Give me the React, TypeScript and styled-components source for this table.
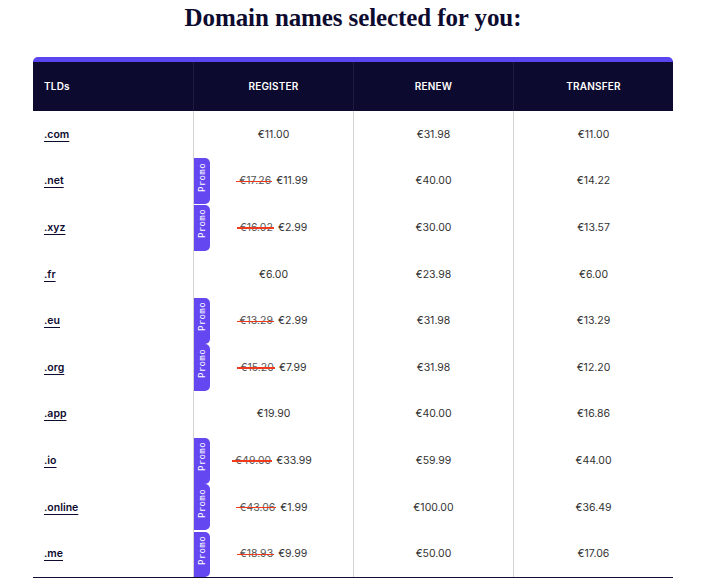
import React from "react";
import styled, { createGlobalStyle } from "styled-components";

const GlobalStyle = createGlobalStyle`
  html, body { margin: 0; padding: 0; background: #ffffff; }
  body { font-family: Inter, "Noto Sans", sans-serif; color: #333333; }
`;

const Page = styled.div`
  width: 640px;
  margin-left: 33px;
  padding-top: 3px;
`;

const Title = styled.h1`
  margin: 0;
  text-align: center;
  font-family: "Liberation Serif", serif;
  font-weight: 700;
  font-size: 25px;
  line-height: 30px;
  color: #0d0b2f;
  letter-spacing: -0.1px;
`;

const Table = styled.div`
  margin-top: 24px;
  border-bottom: 1.5px solid #0d0b2f;
`;

const HeaderRow = styled.div`
  display: grid;
  grid-template-columns: repeat(4, 160px);
  height: 49px;
  background: #0c0a2e;
  border-top: 5px solid #5b45f0;
  border-radius: 5px 5px 0 0;
`;

const HeaderCell = styled.div<{ $first?: boolean }>`
  display: flex;
  align-items: center;
  justify-content: ${(p) => (p.$first ? "flex-start" : "center")};
  padding-left: ${(p) => (p.$first ? "11px" : "0")};
  padding-bottom: 2px;
  border-left: ${(p) => (p.$first ? "none" : "1px solid rgba(255,255,255,0.07)")};
  color: #ffffff;
  font-size: 10px;
  font-weight: 600;
  letter-spacing: 0.2px;
`;

const Row = styled.div`
  display: grid;
  grid-template-columns: repeat(4, 160px);
  height: 46.6px;
`;

const TldCell = styled.div`
  display: flex;
  align-items: center;
  padding-left: 11px;
`;

const TldLink = styled.a`
  font-size: 10.5px;
  font-weight: 600;
  color: #0d0b2f;
  text-decoration: underline;
  text-decoration-thickness: 1px;
  text-underline-offset: 3px;
`;

const PriceCell = styled.div`
  position: relative;
  display: flex;
  align-items: center;
  justify-content: center;
  border-left: 1px solid #d4d4d4;
  font-size: 10.5px;
  color: #333333;
`;

const OldPrice = styled.span`
  position: relative;
  margin-right: 5px;
  color: #555555;
  &::after {
    content: "";
    position: absolute;
    left: -3px;
    right: -1px;
    top: 50%;
    height: 1.4px;
    background: #f03a1e;
  }
`;

const PromoTab = styled.div<{ $gap?: boolean }>`
  position: absolute;
  left: 0;
  top: ${(p) => (p.$gap ? "1.5px" : "0.5px")};
  bottom: 0;
  width: 16px;
  background: #6547f2;
  border-radius: 0 5px 5px 0;
  display: flex;
  align-items: center;
  justify-content: center;
  padding-bottom: 8px;
  box-sizing: border-box;
`;

const PromoText = styled.span`
  writing-mode: vertical-rl;
  transform: rotate(180deg);
  font-family: "DejaVu Sans Mono", "Liberation Mono", monospace;
  font-size: 9px;
  letter-spacing: 0.4px;
  color: #ffffff;
`;

type Item = {
  tld: string;
  register: string;
  old?: string;
  renew: string;
  transfer: string;
  gap?: boolean;
};

const rows: Item[] = [
  { tld: ".com", register: "€11.00", renew: "€31.98", transfer: "€11.00" },
  { tld: ".net", register: "€11.99", old: "€17.26", renew: "€40.00", transfer: "€14.22" },
  { tld: ".xyz", register: "€2.99", old: "€16.02", renew: "€30.00", transfer: "€13.57" },
  { tld: ".fr", register: "€6.00", renew: "€23.98", transfer: "€6.00" },
  { tld: ".eu", register: "€2.99", old: "€13.29", renew: "€31.98", transfer: "€13.29" },
  { tld: ".org", register: "€7.99", old: "€15.20", renew: "€31.98", transfer: "€12.20" },
  { tld: ".app", register: "€19.90", renew: "€40.00", transfer: "€16.86" },
  { tld: ".io", register: "€33.99", old: "€49.00", renew: "€59.99", transfer: "€44.00" },
  { tld: ".online", register: "€1.99", old: "€43.06", renew: "€100.00", transfer: "€36.49" },
  { tld: ".me", register: "€9.99", old: "€18.93", renew: "€50.00", transfer: "€17.06", gap: true },
];

export default function App() {
  return (
    <>
      <GlobalStyle />
      <Page>
        <Title>Domain names selected for you:</Title>
        <Table>
          <HeaderRow>
            <HeaderCell $first>TLDs</HeaderCell>
            <HeaderCell>REGISTER</HeaderCell>
            <HeaderCell>RENEW</HeaderCell>
            <HeaderCell>TRANSFER</HeaderCell>
          </HeaderRow>
          {rows.map((r) => (
            <Row key={r.tld}>
              <TldCell>
                <TldLink>{r.tld}</TldLink>
              </TldCell>
              <PriceCell>
                {r.old && (
                  <PromoTab $gap={r.gap}>
                    <PromoText>Promo</PromoText>
                  </PromoTab>
                )}
                {r.old && <OldPrice>{r.old}</OldPrice>}
                {r.register}
              </PriceCell>
              <PriceCell>{r.renew}</PriceCell>
              <PriceCell>{r.transfer}</PriceCell>
            </Row>
          ))}
        </Table>
      </Page>
    </>
  );
}
